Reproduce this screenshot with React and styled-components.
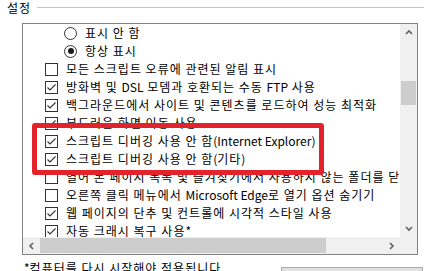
import React from "react";
import styled, { createGlobalStyle } from "styled-components";

const GlobalStyle = createGlobalStyle`
  html, body {
    margin: 0;
    padding: 0;
    background: #ffffff;
    width: 435px;
    height: 271px;
    overflow: hidden;
  }
  body {
    font-family: "Noto Sans CJK KR", "Noto Sans", sans-serif;
    font-size: 12px;
    color: #000000;
  }
`;

const items = [
  { type: "radio", checked: false, label: "표시 안 함" },
  { type: "radio", checked: true, label: "항상 표시" },
  { type: "check", checked: false, label: "모든 스크립트 오류에 관련된 알림 표시" },
  { type: "check", checked: true, label: "방화벽 및 DSL 모뎀과 호환되는 수동 FTP 사용" },
  { type: "check", checked: true, label: "백그라운드에서 사이트 및 콘텐츠를 로드하여 성능 최적화" },
  { type: "check", checked: true, label: "부드러운 화면 이동 사용" },
  { type: "check", checked: true, label: "스크립트 디버깅 사용 안 함(Internet Explorer)" },
  { type: "check", checked: true, label: "스크립트 디버깅 사용 안 함(기타)" },
  { type: "check", checked: false, label: "열어 본 페이지 목록 및 즐겨찾기에서 사용하지 않는 폴더를 닫기" },
  { type: "check", checked: false, label: "오른쪽 클릭 메뉴에서 Microsoft Edge로 열기 옵션 숨기기" },
  { type: "check", checked: true, label: "웹 페이지의 단추 및 컨트롤에 시각적 스타일 사용" },
  { type: "check", checked: true, label: "자동 크래시 복구 사용*" },
];

// Korean runs get a little tracking, latin runs stay as they are
const LATIN = /([A-Za-z0-9().*]+(?: [A-Za-z0-9().*]+)*)/;

function Text({ children }) {
  return children.split(LATIN).map((part, i) =>
    part === "" ? null : LATIN.test(part) ? (
      <Latin key={i}>{part}</Latin>
    ) : (
      <Hangul key={i}>{part}</Hangul>
    )
  );
}

function Chevron({ dir }) {
  const pts = {
    up: "1,5 4,2 7,5",
    down: "1,2 4,5 7,2",
    left: "5,1 2,4 5,7",
    right: "2,1 5,4 2,7",
  }[dir];
  const vertical = dir === "up" || dir === "down";
  return (
    <svg width={vertical ? 8 : 7} height={vertical ? 7 : 8} viewBox={vertical ? "0 0 8 7" : "0 0 7 8"}>
      <polyline points={pts} fill="none" stroke="#606060" strokeWidth="1.6" />
    </svg>
  );
}

export default function App() {
  return (
    <Page>
      <GlobalStyle />
      <GroupHeader>
        <GroupLabel>
          <Text>설정</Text>
        </GroupLabel>
        <GroupLine />
      </GroupHeader>
      <ListBox>
        <Content>
          {items.map((item) => (
            <Row key={item.label} $radio={item.type === "radio"}>
              {item.type === "radio" ? (
                <Radio $checked={item.checked} />
              ) : (
                <CheckBox>
                  {item.checked && (
                    <svg width="11" height="11" viewBox="0 0 11 11">
                      <polyline points="1.5,5.5 4,8 9.5,2.5" fill="none" stroke="#333" strokeWidth="1.1" />
                    </svg>
                  )}
                </CheckBox>
              )}
              <Label>
                <Text>{item.label}</Text>
              </Label>
            </Row>
          ))}
        </Content>
        <VBar>
          <ArrowButton>
            <Chevron dir="up" />
          </ArrowButton>
          <VTrack>
            <VThumb />
          </VTrack>
          <ArrowButton>
            <Chevron dir="down" />
          </ArrowButton>
        </VBar>
        <HBar>
          <ArrowButton>
            <Chevron dir="left" />
          </ArrowButton>
          <HTrack>
            <HThumb />
          </HTrack>
          <ArrowButton>
            <Chevron dir="right" />
          </ArrowButton>
        </HBar>
        <Corner />
      </ListBox>
      <Footer>
        <Note>
          <Text>*컴퓨터를 다시 시작해야 적용됩니다.</Text>
        </Note>
        <RestoreButton>
          <Text>고급 설정 복원(R)</Text>
        </RestoreButton>
      </Footer>
      <Highlight />
    </Page>
  );
}

const Page = styled.div`
  position: relative;
  width: 435px;
  height: 271px;
  overflow: hidden;
  background: #ffffff;
`;

const Hangul = styled.span`
  letter-spacing: 1px;
`;

const Latin = styled.span`
  letter-spacing: 0;
`;

const GroupHeader = styled.div`
  display: flex;
  align-items: center;
  height: 16px;
  padding: 0 11px 0 7px;
  margin-bottom: 7px;
`;

const GroupLabel = styled.span`
  line-height: 16px;
`;

const GroupLine = styled.div`
  flex: 1;
  height: 1px;
  margin: 0 0 2px 6px;
  background: #c4c4c4;
`;

const ListBox = styled.div`
  display: grid;
  grid-template-columns: 1fr 17px;
  grid-template-rows: 1fr 17px;
  margin-left: 22px;
  width: 394px;
  height: 230px;
  border: 1px solid #828282;
  background: #ffffff;
`;

const Content = styled.div`
  overflow: hidden;
`;

const Row = styled.div`
  display: flex;
  align-items: center;
  height: 18px;
  padding-left: ${(p) => (p.$radio ? 41 : 22)}px;
  white-space: nowrap;
`;

const CheckBox = styled.div`
  flex: none;
  display: flex;
  align-items: center;
  justify-content: center;
  width: 11px;
  height: 11px;
  border: 1px solid #333333;
  background: #ffffff;
`;

const Radio = styled.div`
  flex: none;
  display: flex;
  align-items: center;
  justify-content: center;
  width: 11px;
  height: 11px;
  border: 1px solid #333333;
  border-radius: 50%;
  background: #ffffff;

  &::after {
    content: "";
    display: ${(p) => (p.$checked ? "block" : "none")};
    width: 6px;
    height: 6px;
    border-radius: 50%;
    background: #1a1a1a;
  }
`;

const Label = styled.span`
  margin-left: 8px;
  line-height: 18px;
`;

const VBar = styled.div`
  display: flex;
  flex-direction: column;
  background: #f0f0f0;
`;

const ArrowButton = styled.div`
  flex: none;
  display: flex;
  align-items: center;
  justify-content: center;
  width: 17px;
  height: 17px;
`;

const VTrack = styled.div`
  flex: 1;
  padding: 40px 1px 0;
`;

const VThumb = styled.div`
  height: 24px;
  background: #cdcdcd;
`;

const HBar = styled.div`
  display: flex;
  background: #f0f0f0;
`;

const HTrack = styled.div`
  flex: 1;
  padding: 1px 0;
`;

const HThumb = styled.div`
  width: 286px;
  height: 15px;
  background: #cdcdcd;
`;

const Corner = styled.div`
  background: #f0f0f0;
`;

const Footer = styled.div`
  display: flex;
  justify-content: space-between;
  align-items: flex-start;
  padding: 5px 12px 0 24px;
`;

const Note = styled.span`
  line-height: 16px;
  white-space: nowrap;
`;

const RestoreButton = styled.div`
  margin-top: 7px;
  width: 140px;
  height: 21px;
  border: 1px solid #adadad;
  background: #e1e1e1;
  display: flex;
  align-items: center;
  justify-content: center;
  line-height: 21px;
`;

const Highlight = styled.div`
  position: absolute;
  left: 32px;
  top: 123px;
  width: 282px;
  height: 42px;
  border: 5px solid #e3232b;
  border-radius: 3px;
  pointer-events: none;
`;
